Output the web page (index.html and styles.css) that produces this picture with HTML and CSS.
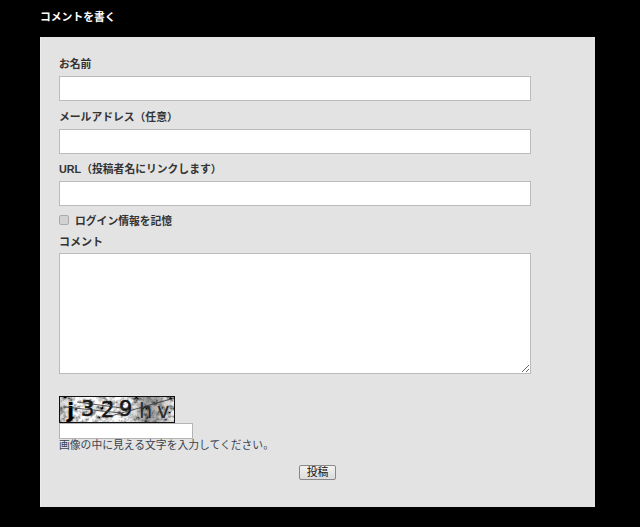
FILE: index.html
```html
<!DOCTYPE html>
<html lang="ja">
<head>
  <meta charset="UTF-8" />
  <title>コメントを書く</title>
  <link rel="stylesheet" href="styles.css">
</head>
<body>
  <h3 class="form-title">コメントを書く</h3>
  <form class="comment-form">
    <label class="field-label" for="author">お名前</label>
    <input class="text-input" type="text" id="author" />
    <label class="field-label" for="email">メールアドレス（任意）</label>
    <input class="text-input" type="text" id="email" />
    <label class="field-label field-label-short" for="url">URL（投稿者名にリンクします）</label>
    <input class="text-input" type="text" id="url" />
    <div class="remember">
      <input type="checkbox" id="remember" />
      <label for="remember">ログイン情報を記憶</label>
    </div>
    <label class="comment-label" for="comment">コメント</label>
    <textarea class="comment-box" id="comment"></textarea>
    <div class="captcha">
      <svg class="captcha-img" width="116" height="27" viewBox="0 0 116 27">
        <defs>
          <filter id="noise" x="0" y="0" width="100%" height="100%">
            <feTurbulence type="fractalNoise" baseFrequency="0.2" numOctaves="3" seed="11" />
            <feColorMatrix type="matrix" values="2.4 0 0 0 -0.5  2.4 0 0 0 -0.5  2.4 0 0 0 -0.5  0 0 0 0 1" />
          </filter>
          <linearGradient id="shade" x1="0" x2="1" y1="0" y2="0">
            <stop offset="0" stop-color="#000" stop-opacity="0.2" />
            <stop offset="0.15" stop-color="#000" stop-opacity="0" />
            <stop offset="0.6" stop-color="#000" stop-opacity="0" />
            <stop offset="0.76" stop-color="#000" stop-opacity="0.4" />
            <stop offset="1" stop-color="#000" stop-opacity="0.05" />
          </linearGradient>
        </defs>
        <rect width="116" height="27" filter="url(#noise)" />
        <rect width="116" height="27" fill="url(#shade)" />
        <g class="captcha-chars">
          <text class="char-dark" x="8" y="22">j</text>
          <text x="22" y="20">3</text>
          <text x="42" y="21">2</text>
          <text x="60" y="20">9</text>
          <text class="char-faint" x="80" y="22">h</text>
          <text class="char-faint" x="98" y="22">v</text>
        </g>
        <path d="M6 11 L62 17 M52 20 L112 3 M18 6 L70 13" stroke="#333" stroke-width="0.8" fill="none" />
        <rect x="0.5" y="0.5" width="115" height="26" fill="none" stroke="#111" />
      </svg>
      <input class="captcha-input" type="text" />
      <p class="captcha-note">画像の中に見える文字を入力してください。</p>
    </div>
    <div class="submit-row">
      <button type="button" class="submit-btn">投稿</button>
    </div>
  </form>
</body>
</html>
```

FILE: styles.css
```css
* { box-sizing: border-box; }
body {
  margin: 0;
  background: #000;
  font-family: "Liberation Sans", "Noto Sans CJK JP", sans-serif;
  font-size: 10.8px;
  color: #333;
}
.form-title {
  margin: 0;
  padding: 9px 0 0 40px;
  height: 37px;
  color: #fff;
  font-size: 10.8px;
  line-height: 16px;
  font-weight: bold;
}
.comment-form {
  width: 555px;
  height: 470px;
  margin-left: 40px;
  padding: 19px 19px 0 18px;
  background: #e3e3e3;
  border-left: 1px solid #ececec;
}
.field-label {
  display: block;
  height: 20px;
  line-height: 17px;
  font-weight: bold;
}
.field-label-short {
  height: 19px;
  line-height: 15px;
}
.text-input {
  display: block;
  width: 472px;
  height: 25px;
  margin-bottom: 8px;
  background: #fff;
  border: 1px solid #bbb;
  padding: 0 4px;
}
.remember {
  display: flex;
  align-items: center;
  height: 16px;
  margin-top: -2px;
  font-weight: bold;
}
.remember input {
  appearance: none;
  width: 10px;
  height: 10px;
  margin: 0 6px 0 0;
  background: #d2d2d2;
  border: 1px solid #aaa;
  border-radius: 2px;
}
.comment-label {
  display: block;
  height: 19px;
  margin-top: 6px;
  line-height: 16px;
  font-size: 11px;
  font-weight: bold;
}
.comment-box {
  display: block;
  width: 472px;
  height: 121px;
  margin: 0;
  background: #fff;
  border: 1px solid #bbb;
}
.captcha {
  margin-top: 22px;
}
.captcha-img {
  display: block;
}
.captcha-chars text {
  font-family: "DejaVu Sans", sans-serif;
  font-size: 21px;
  fill: #161616;
  stroke: #161616;
  stroke-width: 0.5px;
}
.captcha-chars .char-dark {
  font-weight: bold;
  fill: #000;
  stroke: none;
}
.captcha-chars .char-faint {
  fill: #2c2c2c;
  stroke: none;
}
.captcha-input {
  display: block;
  width: 134px;
  height: 16px;
  padding: 0 2px;
  background: #fff;
  border: 1px solid #b4b4b4;
}
.captcha-note {
  margin: 0;
  height: 15px;
  line-height: 13px;
  color: #3a4450;
}
.submit-row {
  margin-top: 11px;
  text-align: center;
}
.submit-btn {
  width: 37px;
  height: 15px;
  padding: 0;
  font-family: inherit;
  font-size: 10.8px;
  line-height: 13px;
  color: #111;
  background: linear-gradient(#f2f2f2, #dcdcdc);
  border: 1px solid #888;
  border-radius: 2px;
}
```
